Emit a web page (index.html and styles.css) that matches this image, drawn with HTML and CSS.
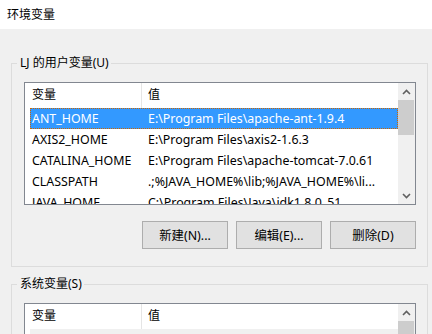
FILE: index.html
```html
<!DOCTYPE html>
<html lang="zh-CN">

<head>
    <meta charset="UTF-8">
    <title>环境变量</title>
    <link rel="stylesheet" href="styles.css">
</head>

<body>
    <div class="window">
        <div class="titlebar">环境变量</div>

        <fieldset class="group">
            <legend>LJ 的用户变量(U)</legend>
            <div class="listview">
                <div class="list-main">
                    <div class="head">
                        <span class="head-name">变量</span>
                        <span class="head-value">值</span>
                    </div>
                    <div class="row selected"><span class="cell-name">ANT_HOME</span><span class="cell-value">E:\Program Files\apache-ant-1.9.4</span></div>
                    <div class="row"><span class="cell-name">AXIS2_HOME</span><span class="cell-value">E:\Program Files\axis2-1.6.3</span></div>
                    <div class="row"><span class="cell-name">CATALINA_HOME</span><span class="cell-value">E:\Program Files\apache-tomcat-7.0.61</span></div>
                    <div class="row"><span class="cell-name">CLASSPATH</span><span class="cell-value">.;%JAVA_HOME%\lib;%JAVA_HOME%\li...</span></div>
                    <div class="row"><span class="cell-name">JAVA_HOME</span><span class="cell-value">C:\Program Files\Java\jdk1.8.0_51</span></div>
                </div>
                <div class="scrollbar">
                    <div class="arrow">
                        <svg width="9" height="6" viewBox="0 0 9 6"><path d="M1 5 L4.5 1.5 L8 5" fill="none" stroke="#606060" stroke-width="1.6"/></svg>
                    </div>
                    <div class="track"><div class="thumb"></div></div>
                    <div class="arrow">
                        <svg width="9" height="6" viewBox="0 0 9 6"><path d="M1 1 L4.5 4.5 L8 1" fill="none" stroke="#606060" stroke-width="1.6"/></svg>
                    </div>
                </div>
            </div>
            <div class="button-group">
                <button>新建(N)...</button>
                <button>编辑(E)...</button>
                <button>删除(D)</button>
            </div>
        </fieldset>

        <fieldset class="group">
            <legend>系统变量(S)</legend>
            <div class="listview">
                <div class="list-main">
                    <div class="head">
                        <span class="head-name">变量</span>
                        <span class="head-value">值</span>
                    </div>
                    <div class="row inactive"><span class="cell-name">ComSpec</span><span class="cell-value">C:\Windows\system32\cmd.exe</span></div>
                    <div class="row"><span class="cell-name">NUMBER_OF_PROCESSORS</span><span class="cell-value">4</span></div>
                </div>
                <div class="scrollbar">
                    <div class="arrow">
                        <svg width="9" height="6" viewBox="0 0 9 6"><path d="M1 5 L4.5 1.5 L8 5" fill="none" stroke="#606060" stroke-width="1.6"/></svg>
                    </div>
                    <div class="track"><div class="thumb"></div></div>
                    <div class="arrow">
                        <svg width="9" height="6" viewBox="0 0 9 6"><path d="M1 1 L4.5 4.5 L8 1" fill="none" stroke="#606060" stroke-width="1.6"/></svg>
                    </div>
                </div>
            </div>
        </fieldset>
    </div>
</body>

</html>
```

FILE: styles.css
```css
body {
    margin: 0;
    font-family: 'Noto Sans', 'Noto Sans CJK SC', sans-serif;
    font-size: 12px;
    color: #000;
    background-color: #f0f0f0;
    overflow: hidden;
}

.window {
    width: 432px;
    height: 334px;
    overflow: hidden;
}

.titlebar {
    height: 29px;
    line-height: 29px;
    padding-left: 7px;
    background-color: #fff;
}

.group {
    margin: 25px 4px 0 11px;
    padding: 10px 11px 17px 12px;
    border: 1px solid #dcdcdc;
    min-width: 0;
}

.group + .group {
    margin-top: 8px;
}

.group legend {
    margin-left: -7px;
    padding: 0 2px 0 3px;
    line-height: 18px;
}

.listview {
    display: flex;
    height: 121px;
    border: 1px solid #828790;
    background-color: #fff;
}

.list-main {
    flex: 1;
    overflow: hidden;
    white-space: nowrap;
}

.head {
    display: flex;
    height: 25px;
    line-height: 24px;
    padding-left: 7px;
}

.head-name {
    width: 109px;
    border-right: 1px solid #e5e5e5;
}

.head-value {
    padding-left: 6px;
}

.row {
    display: flex;
    height: 21px;
    line-height: 21px;
    margin-left: 5px;
    box-sizing: border-box;
    font-size: 12.4px;
}

.cell-name {
    width: 118px;
    padding-left: 2px;
    box-sizing: border-box;
    flex-shrink: 0;
}

.row.selected {
    background-color: #3399ff;
    color: #fff;
    border: 1px dotted #cc6600;
    line-height: 19px;
}

.row.selected .cell-name {
    padding-left: 1px;
    width: 117px;
}

.row.inactive {
    background-color: #f0f0f0;
}

.scrollbar {
    width: 17px;
    display: flex;
    flex-direction: column;
    background-color: #f0f0f0;
}

.arrow {
    height: 17px;
    display: flex;
    justify-content: center;
    align-items: center;
}

.track {
    flex: 1;
}

.thumb {
    height: 35px;
    margin: 0 1px 0 0;
    background-color: #cdcdcd;
}

.button-group {
    display: flex;
    justify-content: flex-end;
    gap: 8px;
    margin-top: 16px;
}

button {
    width: 86px;
    height: 28px;
    padding: 0;
    font-family: inherit;
    font-size: 12.4px;
    color: #000;
    background-color: #e1e1e1;
    border: 1px solid #adadad;
}
```
